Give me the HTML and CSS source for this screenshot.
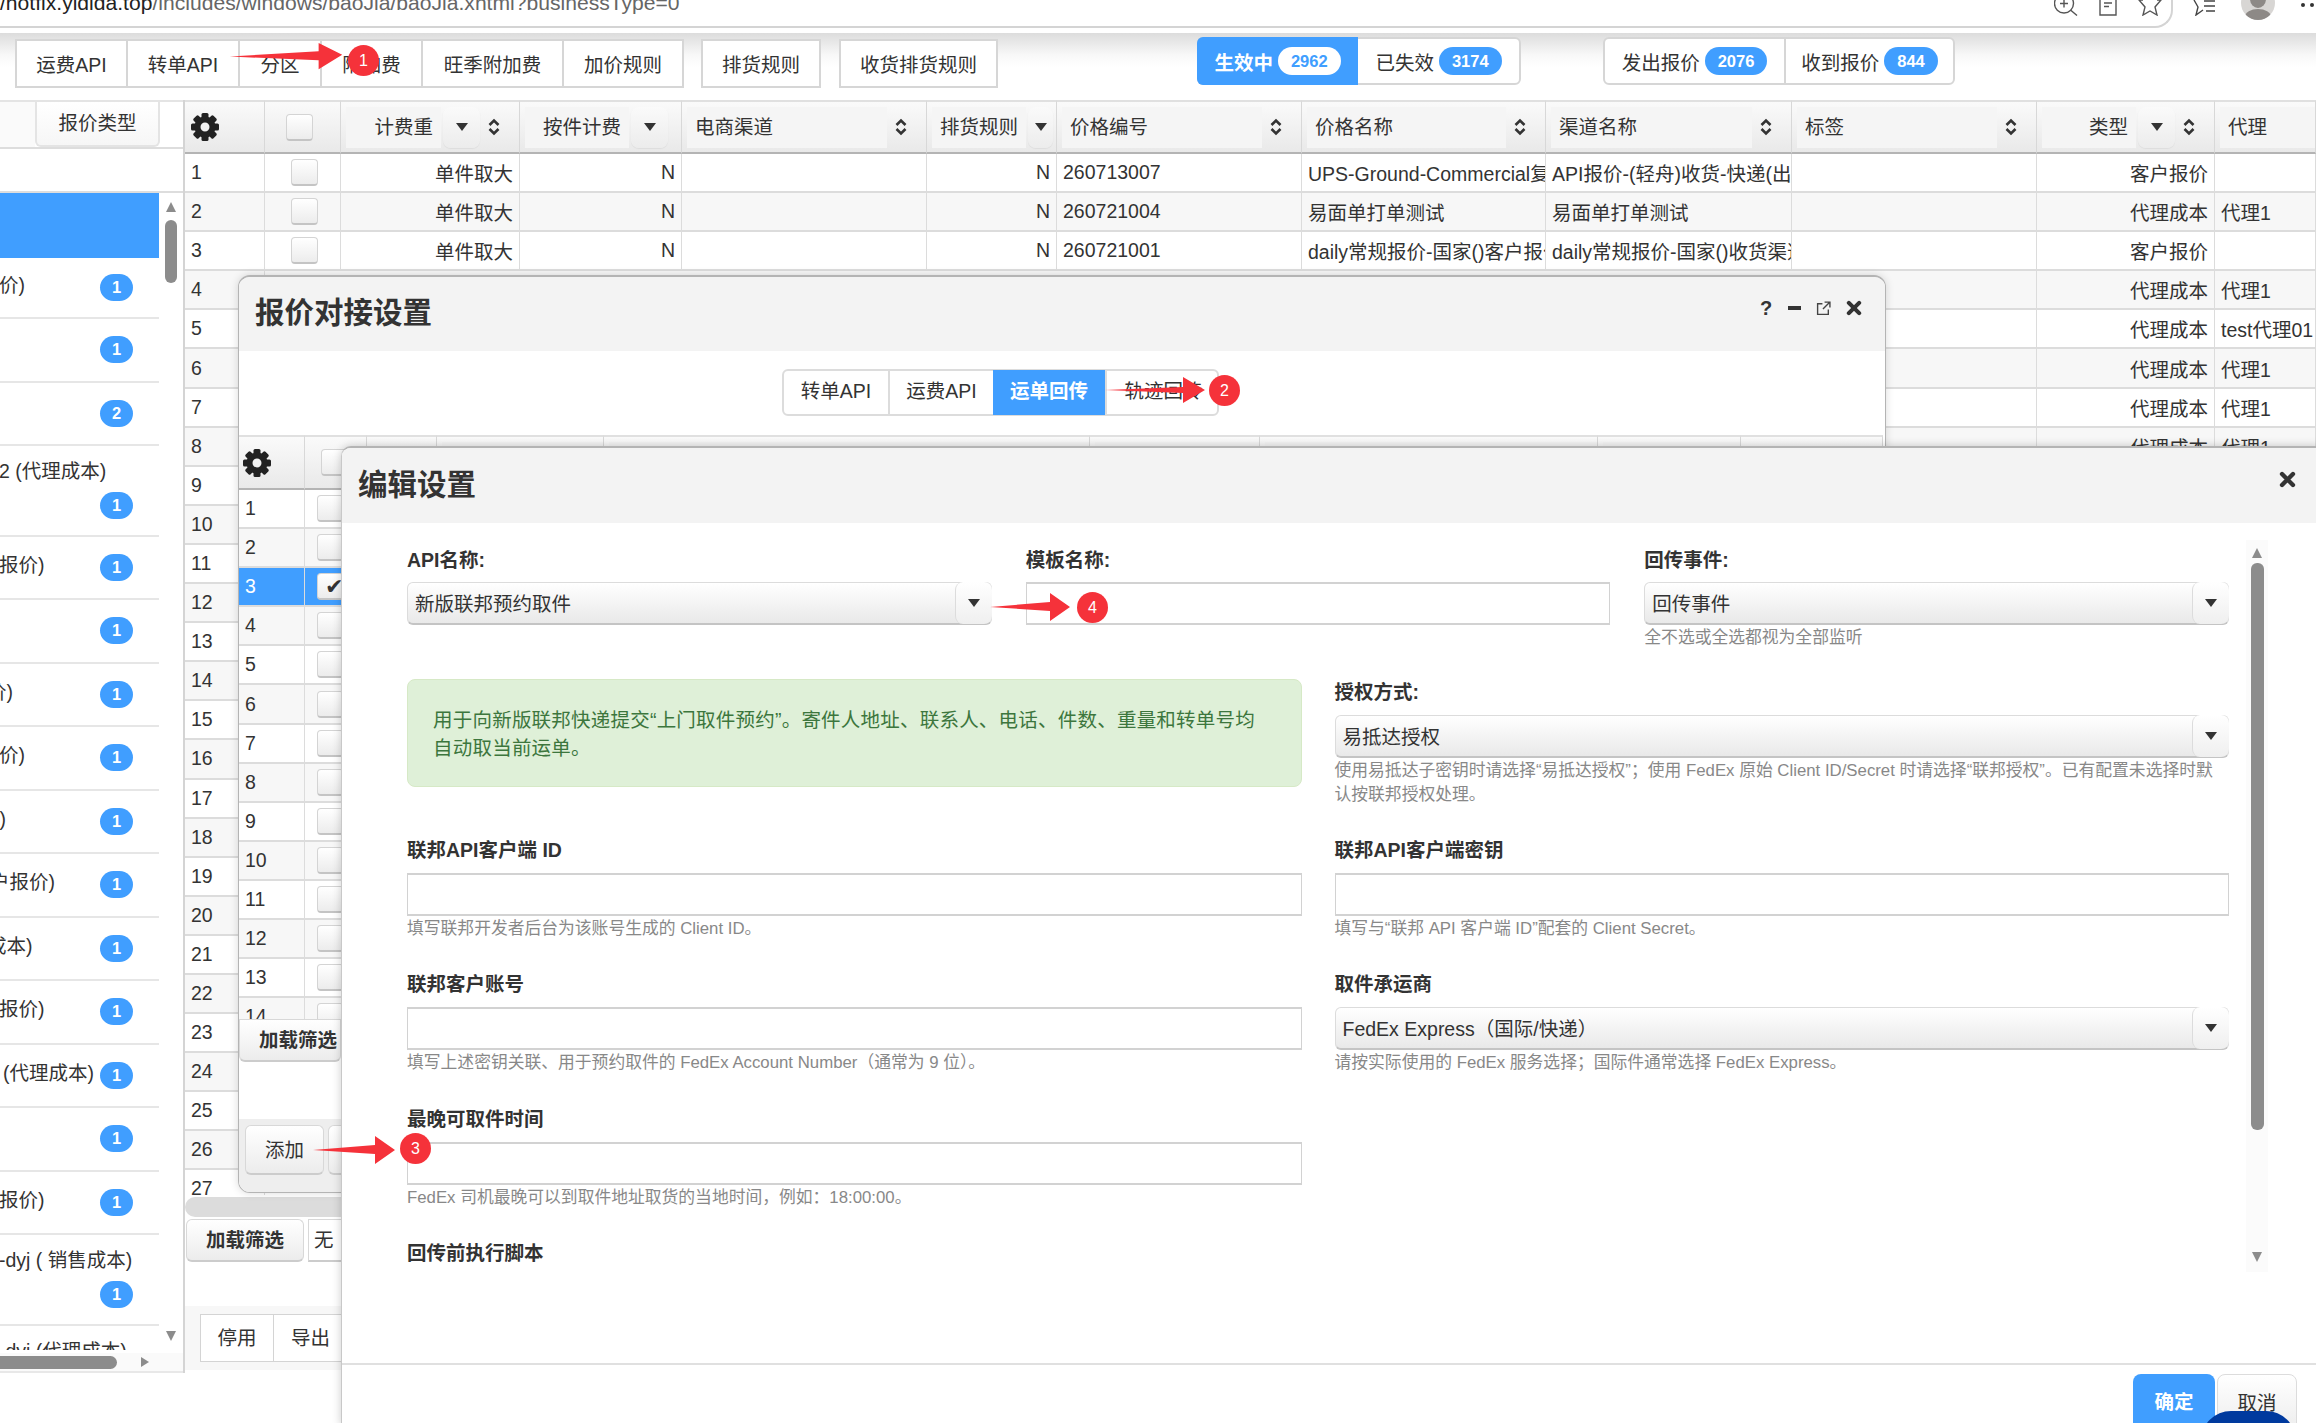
FILE: index.html
```html
<!DOCTYPE html>
<html>
<head>
  <meta charset="utf-8">
  <meta name="viewport" content="width=device-width, initial-scale=1">
  <link rel="stylesheet" href="styles.css">
</head>
<body>

  <!-- Shared icons -->
  <svg class="defs" width="0" height="0">
    <symbol id="gear" viewBox="0 0 28 28">
      <g fill="#222">
        <rect x="10.5" y="0" width="7" height="7" rx="1.5"/>
        <rect x="10.5" y="0" width="7" height="7" rx="1.5" transform="rotate(45 14 14)"/>
        <rect x="10.5" y="0" width="7" height="7" rx="1.5" transform="rotate(90 14 14)"/>
        <rect x="10.5" y="0" width="7" height="7" rx="1.5" transform="rotate(135 14 14)"/>
        <rect x="10.5" y="0" width="7" height="7" rx="1.5" transform="rotate(180 14 14)"/>
        <rect x="10.5" y="0" width="7" height="7" rx="1.5" transform="rotate(225 14 14)"/>
        <rect x="10.5" y="0" width="7" height="7" rx="1.5" transform="rotate(270 14 14)"/>
        <rect x="10.5" y="0" width="7" height="7" rx="1.5" transform="rotate(315 14 14)"/>
      </g>
      <circle cx="14" cy="14" r="7.5" fill="none" stroke="#222" stroke-width="6"/>
    </symbol>
    <symbol id="sort" viewBox="0 0 12 18">
      <path d="M1.5 7 L6 2.5 L10.5 7 M1.5 11 L6 15.5 L10.5 11" fill="none" stroke="#333" stroke-width="2.6"/>
    </symbol>
    <symbol id="down" viewBox="0 0 12 8">
      <path d="M0 0 H12 L6 8 Z" fill="#333"/>
    </symbol>
    <symbol id="close" viewBox="0 0 14 14">
      <path d="M2.5 2.5 L11.5 11.5 M11.5 2.5 L2.5 11.5" fill="none" stroke="#333" stroke-width="3.6" stroke-linecap="round"/>
    </symbol>
  </svg>

  <!-- Browser address bar, cut off by the top of the capture -->
  <div class="address">
    <div class="address-field">
      <div class="url"><b>/hotfix.yidida.top</b>/includes/windows/baoJia/baoJia.xhtml?businessType=0</div>
      <svg class="chrome-icon zoom-icon" viewBox="0 0 24 15"><circle cx="10" cy="3" r="9.5" fill="none" stroke="#555" stroke-width="1.4"/><path d="M16.5 9.5 L23 15 M10 -1 V7 M6 3 H14" fill="none" stroke="#555" stroke-width="1.4"/></svg>
      <svg class="chrome-icon doc-icon" viewBox="0 0 18 16"><path d="M1 0 V15 H17 V0 M5 3 H13 M5 6.5 H10" fill="none" stroke="#555" stroke-width="1.4"/></svg>
      <svg class="chrome-icon star-icon" viewBox="0 0 24 16"><path d="M5 0 L1 0 L7 7 L5 15 L12 11 L19 15 L17 7 L23 0 L19 0" fill="none" stroke="#555" stroke-width="1.4"/></svg>
    </div>
    <svg class="chrome-icon fav-icon" viewBox="0 0 24 16"><path d="M2 0 L6 7 L4 15 L11 10 M12 1 H23 M12 6 H23 M14 11 H23" fill="none" stroke="#444" stroke-width="1.4"/></svg>
    <div class="avatar"><span class="avatar-head"></span><span class="avatar-body"></span></div>
    <div class="dots"><span></span><span></span></div>
  </div>

  <!-- Top toolbar -->
  <div class="toolbar">
    <div class="btn-group">
      <a class="tbtn w113">运费API</a><a class="tbtn w112">转单API</a><a class="tbtn w82">分区</a><a class="tbtn w101">附加费</a><a class="tbtn w141">旺季附加费</a><a class="tbtn w120">加价规则</a>
    </div>
    <a class="tbtn single w120">排货规则</a>
    <a class="tbtn single w159">收货排货规则</a>
    <div class="status-group first">
      <a class="status active w161">生效中<span class="pill">2962</span></a><a class="status w161">已失效<span class="pill">3174</span></a>
    </div>
    <div class="status-group second">
      <a class="status w179">发出报价<span class="pill">2076</span></a><a class="status w169">收到报价<span class="pill">844</span></a>
    </div>
  </div>

  <div class="content">

    <!-- Left list of quote types -->
    <div class="left">
      <div class="left-head">
        <div class="left-head-stub"></div>
        <div class="left-head-btn">报价类型</div>
      </div>
      <div class="left-filter"></div>
      <div class="left-body">
        <ul class="type-list">
          <li class="selected"></li>
          <li><span class="cut">价)</span><i class="count">1</i></li>
          <li class="tall"><i class="count">1</i></li>
          <li class="tall"><i class="count">2</i></li>
          <li class="double"><span class="cut">2 (代理成本)</span><i class="count">1</i></li>
          <li class="tall"><span class="cut">报价)</span><i class="count">1</i></li>
          <li class="tall"><i class="count">1</i></li>
          <li class="tall"><span class="cut cut-more">价)</span><i class="count">1</i></li>
          <li class="tall"><span class="cut">价)</span><i class="count">1</i></li>
          <li class="tall"><span class="cut cut-most">价)</span><i class="count">1</i></li>
          <li class="tall"><span class="cut cut-some">户报价)</span><i class="count">1</i></li>
          <li class="tall"><span class="cut cut-more">成本)</span><i class="count">1</i></li>
          <li class="tall"><span class="cut">报价)</span><i class="count">1</i></li>
          <li class="tall"><span class="cut cut-none">(代理成本)</span><i class="count">1</i></li>
          <li class="tall"><i class="count">1</i></li>
          <li class="tall"><span class="cut">报价)</span><i class="count">1</i></li>
          <li class="double"><span class="cut">-dyj ( 销售成本)</span><i class="count">1</i></li>
          <li class="double"><span class="cut">-dyj (代理成本)</span><i class="count">1</i></li>
        </ul>
        <div class="vscroll">
          <span class="arrow-up"></span>
          <span class="vthumb"></span>
          <span class="arrow-down"></span>
        </div>
      </div>
      <div class="hscroll">
        <span class="hthumb"></span>
        <span class="arrow-right"></span>
      </div>
    </div>

    <!-- Main price table -->
    <div class="main">
      <div class="grid-wrap">
        <table class="grid">
          <colgroup>
            <col class="c80"><col class="c76"><col class="c179"><col class="c162"><col class="c245"><col class="c130"><col class="c245"><col class="c244"><col class="c246"><col class="c245"><col class="c178"><col class="c101">
          </colgroup>
          <thead>
            <tr>
              <th><svg class="gear"><use href="#gear"/></svg></th>
              <th><span class="check head-check"></span></th>
              <th><div class="hd"><span class="hd-label right">计费重</span><span class="hd-drop"><svg><use href="#down"/></svg></span><svg class="sort"><use href="#sort"/></svg></div></th>
              <th><div class="hd"><span class="hd-label right">按件计费</span><span class="hd-drop"><svg><use href="#down"/></svg></span></div></th>
              <th><div class="hd"><span class="hd-label">电商渠道</span><svg class="sort"><use href="#sort"/></svg></div></th>
              <th><div class="hd"><span class="hd-label">排货规则</span><span class="hd-drop narrow"><svg><use href="#down"/></svg></span></div></th>
              <th><div class="hd"><span class="hd-label">价格编号</span><svg class="sort"><use href="#sort"/></svg></div></th>
              <th><div class="hd"><span class="hd-label">价格名称</span><svg class="sort"><use href="#sort"/></svg></div></th>
              <th><div class="hd"><span class="hd-label">渠道名称</span><svg class="sort"><use href="#sort"/></svg></div></th>
              <th><div class="hd"><span class="hd-label">标签</span><svg class="sort"><use href="#sort"/></svg></div></th>
              <th><div class="hd"><span class="hd-label right">类型</span><span class="hd-drop"><svg><use href="#down"/></svg></span><svg class="sort"><use href="#sort"/></svg></div></th>
              <th><div class="hd"><span class="hd-label">代理</span></div></th>
            </tr>
          </thead>
          <tbody>
            <tr><td>1</td><td class="mid"><span class="check"></span></td><td class="right">单件取大</td><td class="right">N</td><td></td><td class="right">N</td><td>260713007</td><td>UPS-Ground-Commercial复制报价</td><td>API报价-(轻舟)收货-快递(出口)</td><td></td><td class="right">客户报价</td><td></td></tr>
            <tr><td>2</td><td class="mid"><span class="check"></span></td><td class="right">单件取大</td><td class="right">N</td><td></td><td class="right">N</td><td>260721004</td><td>易面单打单测试</td><td>易面单打单测试</td><td></td><td class="right">代理成本</td><td>代理1</td></tr>
            <tr><td>3</td><td class="mid"><span class="check"></span></td><td class="right">单件取大</td><td class="right">N</td><td></td><td class="right">N</td><td>260721001</td><td>daily常规报价-国家()客户报价</td><td>daily常规报价-国家()收货渠道</td><td></td><td class="right">客户报价</td><td></td></tr>
            <tr><td>4</td><td colspan="9"></td><td class="right">代理成本</td><td>代理1</td></tr>
            <tr><td>5</td><td colspan="9"></td><td class="right">代理成本</td><td>test代理01</td></tr>
            <tr><td>6</td><td colspan="9"></td><td class="right">代理成本</td><td>代理1</td></tr>
            <tr><td>7</td><td colspan="9"></td><td class="right">代理成本</td><td>代理1</td></tr>
            <tr><td>8</td><td colspan="9"></td><td class="right">代理成本</td><td>代理1</td></tr>
            <tr><td>9</td><td colspan="11"></td></tr>
            <tr><td>10</td><td colspan="11"></td></tr>
            <tr><td>11</td><td colspan="11"></td></tr>
            <tr><td>12</td><td colspan="11"></td></tr>
            <tr><td>13</td><td colspan="11"></td></tr>
            <tr><td>14</td><td colspan="11"></td></tr>
            <tr><td>15</td><td colspan="11"></td></tr>
            <tr><td>16</td><td colspan="11"></td></tr>
            <tr><td>17</td><td colspan="11"></td></tr>
            <tr><td>18</td><td colspan="11"></td></tr>
            <tr><td>19</td><td colspan="11"></td></tr>
            <tr><td>20</td><td colspan="11"></td></tr>
            <tr><td>21</td><td colspan="11"></td></tr>
            <tr><td>22</td><td colspan="11"></td></tr>
            <tr><td>23</td><td colspan="11"></td></tr>
            <tr><td>24</td><td colspan="11"></td></tr>
            <tr><td>25</td><td colspan="11"></td></tr>
            <tr><td>26</td><td colspan="11"></td></tr>
            <tr><td>27</td><td colspan="11"></td></tr>
          </tbody>
        </table>
      </div>
      <div class="grid-scroll"><span></span></div>
      <div class="filter-row">
        <a class="pbtn strong w118">加载筛选</a>
        <a class="pbtn flat">无</a>
      </div>
      <div class="main-foot">
        <a class="fbtn">停用</a><a class="fbtn">导出</a>
      </div>
    </div>
  </div>

  <!-- Quote connection window -->
  <div class="window window-back">
    <div class="window-title">
      <h2>报价对接设置</h2>
      <div class="window-tools">
        <span class="tool-help">?</span>
        <span class="tool-min"></span>
        <svg class="tool-ext" viewBox="0 0 14 14"><path d="M6 2.5 H1.5 V12.5 H11.5 V8 M8 1 H13 V6 M13 1 L6.5 7.5" fill="none" stroke="#444" stroke-width="1.3"/></svg>
        <svg class="tool-close"><use href="#close"/></svg>
      </div>
    </div>
    <div class="tabs">
      <a class="tab w104">转单API</a><a class="tab w105">运费API</a><a class="tab active w112">运单回传</a><a class="tab w115">轨迹回传</a>
    </div>
    <div class="inner-wrap">
      <table class="grid inner">
        <colgroup>
          <col class="c65"><col class="c61"><col class="c69"><col class="c165"><col class="c480"><col class="c167"><col class="c334"><col class="c141"><col class="c140">
        </colgroup>
        <thead>
          <tr>
            <th><svg class="gear"><use href="#gear"/></svg></th>
            <th><span class="check head-check"></span></th>
            <th></th>
            <th><div class="hd"><span class="hd-label"></span></div></th>
            <th><div class="hd"><span class="hd-label"></span></div></th>
            <th><div class="hd"><span class="hd-label"></span></div></th>
            <th><div class="hd"><span class="hd-label"></span></div></th>
            <th><div class="hd"><span class="hd-label"></span></div></th>
            <th></th>
          </tr>
        </thead>
        <tbody>
          <tr><td>1</td><td class="mid"><span class="check"></span></td><td colspan="7"></td></tr>
          <tr><td>2</td><td class="mid"><span class="check"></span></td><td colspan="7"></td></tr>
          <tr class="picked"><td>3</td><td class="mid"><span class="check checked">✔</span></td><td colspan="7"></td></tr>
          <tr><td>4</td><td class="mid"><span class="check"></span></td><td colspan="7"></td></tr>
          <tr><td>5</td><td class="mid"><span class="check"></span></td><td colspan="7"></td></tr>
          <tr><td>6</td><td class="mid"><span class="check"></span></td><td colspan="7"></td></tr>
          <tr><td>7</td><td class="mid"><span class="check"></span></td><td colspan="7"></td></tr>
          <tr><td>8</td><td class="mid"><span class="check"></span></td><td colspan="7"></td></tr>
          <tr><td>9</td><td class="mid"><span class="check"></span></td><td colspan="7"></td></tr>
          <tr><td>10</td><td class="mid"><span class="check"></span></td><td colspan="7"></td></tr>
          <tr><td>11</td><td class="mid"><span class="check"></span></td><td colspan="7"></td></tr>
          <tr><td>12</td><td class="mid"><span class="check"></span></td><td colspan="7"></td></tr>
          <tr><td>13</td><td class="mid"><span class="check"></span></td><td colspan="7"></td></tr>
          <tr><td>14</td><td class="mid"><span class="check"></span></td><td colspan="7"></td></tr>
        </tbody>
      </table>
    </div>
    <a class="pbtn strong inner-filter">加载筛选</a>
    <div class="window-foot">
      <a class="pbtn w79">添加</a><a class="pbtn w79">修改</a>
    </div>
  </div>

  <!-- Edit settings window -->
  <div class="window window-front">
    <div class="window-title front-title">
      <h2>编辑设置</h2>
      <svg class="front-close"><use href="#close"/></svg>
    </div>
    <div class="edit-body">
      <div class="form">
        <div class="row-three">
          <div class="field">
            <label>API名称:</label>
            <div class="select"><span>新版联邦预约取件</span><i><svg><use href="#down"/></svg></i></div>
          </div>
          <div class="field">
            <label>模板名称:</label>
            <div class="input"></div>
          </div>
          <div class="field">
            <label>回传事件:</label>
            <div class="select"><span>回传事件</span><i><svg><use href="#down"/></svg></i></div>
            <p class="hint">全不选或全选都视为全部监听</p>
          </div>
        </div>
        <div class="row-two">
          <div class="alert">用于向新版联邦快递提交“上门取件预约”。寄件人地址、联系人、电话、件数、重量和转单号均自动取当前运单。</div>
          <div class="field">
            <label>授权方式:</label>
            <div class="select"><span>易抵达授权</span><i><svg><use href="#down"/></svg></i></div>
            <p class="hint">使用易抵达子密钥时请选择“易抵达授权”；使用 FedEx 原始 Client ID/Secret 时请选择“联邦授权”。已有配置未选择时默认按联邦授权处理。</p>
          </div>
          <div class="field">
            <label>联邦API客户端 ID</label>
            <div class="input"></div>
            <p class="hint">填写联邦开发者后台为该账号生成的 Client ID。</p>
          </div>
          <div class="field">
            <label>联邦API客户端密钥</label>
            <div class="input"></div>
            <p class="hint">填写与“联邦 API 客户端 ID”配套的 Client Secret。</p>
          </div>
          <div class="field">
            <label>联邦客户账号</label>
            <div class="input"></div>
            <p class="hint">填写上述密钥关联、用于预约取件的 FedEx Account Number（通常为 9 位）。</p>
          </div>
          <div class="field">
            <label>取件承运商</label>
            <div class="select"><span>FedEx Express（国际/快递）</span><i><svg><use href="#down"/></svg></i></div>
            <p class="hint">请按实际使用的 FedEx 服务选择；国际件通常选择 FedEx Express。</p>
          </div>
          <div class="field">
            <label>最晚可取件时间</label>
            <div class="input"></div>
            <p class="hint">FedEx 司机最晚可以到取件地址取货的当地时间，例如：18:00:00。</p>
          </div>
          <div class="field"></div>
          <div class="field">
            <label>回传前执行脚本</label>
          </div>
        </div>
      </div>
      <div class="edit-scroll">
        <span class="arrow-up"></span>
        <span class="edit-thumb"></span>
        <span class="arrow-down"></span>
      </div>
    </div>
    <div class="edit-foot">
      <a class="ok">确定</a><a class="cancel">取消</a>
      <span class="blob"></span>
    </div>
  </div>

  <!-- Red annotation marks drawn on top of the screenshot -->
  <div class="mark mark-1">
    <svg viewBox="0 0 124 32"><path d="M0 15 L98 9 L98 0 L124 13 L98 29 L98 19 Z"/></svg>
    <span>1</span>
  </div>
  <div class="mark mark-2">
    <svg viewBox="0 0 100 30"><path d="M0 15 L78 12 L78 2 L100 15 L78 28 L78 18 Z"/></svg>
    <span>2</span>
  </div>
  <div class="mark mark-3">
    <svg viewBox="0 0 82 30"><path d="M0 15 L62 10 L62 1 L82 15 L62 29 L62 19 Z"/></svg>
    <span>3</span>
  </div>
  <div class="mark mark-4">
    <svg viewBox="0 0 80 30"><path d="M0 15 L60 10 L60 1 L80 15 L60 29 L60 19 Z"/></svg>
    <span>4</span>
  </div>

</body>
</html>
```

FILE: styles.css
```css
/* Base styling */
* {
  box-sizing: border-box;
}
html, body {
  margin: 0;
  padding: 0;
}
body {
  width: 2316px;
  height: 1423px;
  position: relative;
  overflow: hidden;
  background: #fff;
  color: #333;
  font-family: "Liberation Sans", "Noto Sans CJK SC", sans-serif;
  font-size: 19.5px;
}
.defs {
  position: absolute;
}
ul, p, h2 {
  margin: 0;
  padding: 0;
}

/* Browser bar */
.address {
  height: 33px;
  display: flex;
  overflow: hidden;
  background: #fff;
}
.address-field {
  width: 2173px;
  height: 28px;
  flex: none;
  position: relative;
  border-bottom: 2px solid #d4d4d4;
  border-right: 2px solid #d4d4d4;
  border-bottom-right-radius: 18px;
}
.url {
  margin-top: -12px;
  font-size: 21.1px;
  line-height: 30px;
  color: #666;
  white-space: nowrap;
}
.url b {
  font-weight: normal;
  color: #222;
}
.chrome-icon {
  position: absolute;
  top: 0;
  height: 16px;
}
.zoom-icon { left: 2054px; width: 24px; }
.doc-icon { left: 2099px; width: 18px; }
.star-icon { left: 2138px; width: 24px; }
.fav-icon { left: 2192px; width: 24px; }
.avatar {
  position: absolute;
  left: 2241px;
  top: -14px;
  width: 34px;
  height: 34px;
  border-radius: 50%;
  background: #d8d6d4;
  overflow: hidden;
}
.avatar-head {
  position: absolute;
  left: 9px;
  top: 4px;
  width: 16px;
  height: 18px;
  border-radius: 50%;
  background: #8d8986;
}
.avatar-body {
  position: absolute;
  left: 4px;
  top: 23px;
  width: 26px;
  height: 16px;
  border-radius: 50%;
  background: #8d8986;
}
.dots {
  position: absolute;
  left: 2301px;
  top: 3px;
  display: flex;
  gap: 5px;
}
.dots span {
  width: 4px;
  height: 4px;
  border-radius: 50%;
  background: #333;
}

/* Toolbar */
.toolbar {
  height: 67px;
  padding: 6px 0 0 15px;
  display: flex;
  align-items: flex-start;
  background: linear-gradient(#dcdcdc, #f8f8f8 22px, #fff 34px);
}
.btn-group {
  display: flex;
}
.tbtn {
  height: 49px;
  line-height: 48px;
  text-align: center;
  flex: none;
  border: 2px solid #d6d6d6;
  border-left-width: 0;
  background: #fff;
}
.btn-group .tbtn:first-child {
  border-left-width: 2px;
}
.tbtn.single {
  border-left-width: 2px;
  margin-left: 17px;
}
.tbtn.single + .tbtn.single {
  margin-left: 18px;
}
.w82 { width: 82px; }
.w101 { width: 101px; }
.w104 { width: 104px; }
.w105 { width: 105px; }
.w112 { width: 112px; }
.w113 { width: 113px; }
.w115 { width: 115px; }
.w118 { width: 118px; }
.w120 { width: 120px; }
.w141 { width: 141px; }
.w159 { width: 159px; }
.w161 { width: 161px; }
.w169 { width: 169px; }
.w179 { width: 179px; }
.w79 { width: 79px; }

.status-group {
  height: 48px;
  margin-top: -2px;
  display: flex;
  border: 2px solid #d6d6d6;
  border-radius: 6px;
  background: #fff;
}
.status-group.first {
  margin-left: 199px;
  border-color: #d6d6d6;
}
.status-group.second {
  margin-left: 82px;
}
.status {
  display: flex;
  align-items: center;
  justify-content: center;
  gap: 5px;
  flex: none;
}
.status + .status {
  border-left: 2px solid #d6d6d6;
}
.status.active {
  background: #409eff;
  color: #fff;
  font-weight: bold;
  margin: -2px 0 -2px -2px;
  border-radius: 6px 0 0 6px;
}
.status.active + .status {
  border-left: 0;
}
.pill {
  height: 28px;
  padding: 0 13px;
  line-height: 28px;
  border-radius: 14px;
  background: #409eff;
  color: #fff;
  font-size: 16.5px;
  font-weight: bold;
  text-align: center;
}
.active .pill {
  background: #fff;
  color: #409eff;
}

/* Page body */
.content {
  display: flex;
  height: 1273px;
}

/* Left panel */
.left {
  width: 183px;
  flex: none;
  height: 1273px;
  display: flex;
  flex-direction: column;
  overflow: hidden;
  border-bottom: 2px solid #e8e8e8;
}
.left-head {
  height: 47px;
  flex: none;
  display: flex;
  border-top: 2px solid #e4e4e4;
}
.left-head-stub {
  width: 35px;
  background: #fafafa;
}
.left-head-btn {
  width: 125px;
  height: 45px;
  line-height: 42px;
  text-align: center;
  border: 2px solid #e4e4e4;
  border-top: 0;
  border-radius: 0 0 6px 6px;
  background: linear-gradient(#fff, #f6f6f6);
}
.left-filter {
  height: 46px;
  flex: none;
  border-top: 2px solid #ddd;
  border-bottom: 2px solid #ddd;
}
.left-body {
  flex: 1;
  min-height: 0;
  display: flex;
}
.type-list {
  width: 159px;
  flex: none;
  list-style: none;
  overflow: hidden;
  height: 1157px;
}
.type-list li {
  height: 63.5px;
  display: flex;
  align-items: center;
  justify-content: flex-end;
  padding-right: 26px;
  border-bottom: 2px solid #e6e6e6;
  white-space: nowrap;
}
.type-list li.selected {
  height: 65px;
  background: #409eff;
  border-bottom: 0;
}
.type-list li:nth-child(2) {
  height: 61px;
}
.type-list li.double {
  height: 90.5px;
  display: block;
  padding-top: 19px;
  line-height: 28px;
}
.cut {
  flex: 1;
  display: block;
  overflow: hidden;
  margin-left: -1px;
  margin-top: -8px;
}
.cut-more {
  margin-left: -13px;
}
.cut-some {
  margin-left: -10px;
}
.cut-most {
  margin-left: -20px;
}
.cut-none {
  margin-left: 3px;
}
.count {
  flex: none;
  display: block;
  width: 33px;
  height: 27px;
  border-radius: 14px;
  background: #409eff;
  color: #fff;
  font-style: normal;
  font-weight: bold;
  font-size: 16.5px;
  line-height: 27px;
  text-align: center;
}
.double .count {
  margin: 7px 0 0 auto;
}
.vscroll {
  width: 24px;
  flex: none;
  display: flex;
  flex-direction: column;
  align-items: center;
  padding: 9px 0 12px;
}
.arrow-up {
  width: 0;
  height: 0;
  border-left: 5px solid transparent;
  border-right: 5px solid transparent;
  border-bottom: 10px solid #8c8c8c;
}
.arrow-down {
  margin-top: auto;
  width: 0;
  height: 0;
  border-left: 5px solid transparent;
  border-right: 5px solid transparent;
  border-top: 10px solid #8c8c8c;
}
.vthumb {
  margin-top: 8px;
  width: 12px;
  height: 63px;
  border-radius: 6px;
  background: #8c8c8c;
}
.hscroll {
  height: 18px;
  flex: none;
  display: flex;
  align-items: center;
  background: #fafafa;
}
.hthumb {
  width: 117px;
  height: 13px;
  border-radius: 0 7px 7px 0;
  background: #8c8c8c;
}
.arrow-right {
  margin-left: 24px;
  width: 0;
  height: 0;
  border-top: 5px solid transparent;
  border-bottom: 5px solid transparent;
  border-left: 8px solid #8c8c8c;
}

/* Main table */
.main {
  flex: 1;
  min-width: 0;
  border-left: 2px solid #d4d4d4;
  display: flex;
  flex-direction: column;
}
.grid-wrap {
  height: 1095px;
  flex: none;
  overflow: hidden;
}
.grid {
  table-layout: fixed;
  width: 2131px;
  border-collapse: separate;
  border-spacing: 0;
}
.c61 { width: 61px; }
.c65 { width: 65px; }
.c69 { width: 69px; }
.c76 { width: 76px; }
.c80 { width: 80px; }
.c101 { width: 101px; }
.c130 { width: 130px; }
.c140 { width: 140px; }
.c141 { width: 141px; }
.c162 { width: 162px; }
.c165 { width: 165px; }
.c167 { width: 167px; }
.c178 { width: 178px; }
.c179 { width: 179px; }
.c244 { width: 244px; }
.c245 { width: 245px; }
.c246 { width: 246px; }
.c334 { width: 334px; }
.c480 { width: 480px; }
.grid th {
  height: 54px;
  padding: 0;
  font-weight: normal;
  background: linear-gradient(#fafafa, #e9e9e9);
  border-top: 2px solid #e0e0e0;
  border-right: 1px solid #d8d8d8;
  border-bottom: 2px solid #b4b4b4;
  text-align: left;
  overflow: hidden;
}
.grid td {
  height: 39.1px;
  padding: 0 6px;
  border-right: 1px solid #dcdcdc;
  border-bottom: 2px solid #dcdcdc;
  white-space: nowrap;
  overflow: hidden;
}
.grid td.right {
  text-align: right;
}
.grid td.mid {
  padding: 0 0 0 3px;
  text-align: center;
}
.grid tbody tr:nth-child(even) td {
  background: #f7f7f7;
}
.grid tbody tr:nth-child(odd) td {
  background: #fff;
}
.gear {
  display: block;
  width: 28px;
  height: 28px;
  margin-left: 6px;
}
.check {
  display: inline-block;
  width: 27px;
  height: 27px;
  vertical-align: middle;
  border: 1px solid #d4d4d4;
  border-bottom: 2px solid #c4c4c4;
  border-radius: 4px;
  background: linear-gradient(#fff, #ececec);
}
.head-check {
  display: block;
  margin-left: 21px;
}
.hd {
  height: 41px;
  display: flex;
  align-items: center;
  padding: 0 0 0 5px;
}
.hd-label {
  flex: 1;
  height: 41px;
  line-height: 41px;
  padding: 0 8px;
  background: #f5f5f5;
  white-space: nowrap;
}
.hd-label.right {
  text-align: right;
}
.hd-drop {
  width: 37px;
  height: 41px;
  margin-left: 2px;
  flex: none;
  display: flex;
  align-items: center;
  justify-content: center;
  border-radius: 8px;
  background: linear-gradient(#fafafa, #ececec);
  box-shadow: 0 1px 1px #ddd;
}
.hd-drop svg {
  width: 12px;
  height: 8px;
}
.hd-drop:last-child {
  margin-right: 13px;
}
.hd-drop.narrow:last-child {
  margin-right: 4px;
  width: 25px;
}
.sort {
  width: 12px;
  height: 18px;
  flex: none;
  margin: 0 19px 0 8px;
}
.grid-scroll {
  height: 22px;
  flex: none;
  padding: 2px 0;
}
.grid-scroll span {
  display: block;
  width: 700px;
  height: 20px;
  border-radius: 10px;
  background: #dcdcdc;
}
.filter-row {
  height: 89px;
  flex: none;
  padding-top: 2px;
  display: flex;
  align-items: flex-start;
  gap: 4px;
  padding-left: 1px;
}
.pbtn {
  height: 43px;
  line-height: 41px;
  text-align: center;
  flex: none;
  border: 1px solid #d8d8d8;
  border-bottom: 2px solid #ccc;
  border-radius: 6px;
  background: linear-gradient(#fff, #ececec);
}
.pbtn.strong {
  font-weight: bold;
}
.pbtn.flat {
  width: 80px;
  text-align: left;
  padding-left: 5px;
  background: #fff;
  border-radius: 0;
}
.main-foot {
  height: 64px;
  flex: none;
  padding: 8px 0 0 15px;
  display: flex;
  align-items: flex-start;
  background: #f7f7f7;
}
.fbtn {
  width: 74px;
  height: 48px;
  line-height: 46px;
  text-align: center;
  border: 1px solid #d4d4d4;
  background: #fff;
}
.fbtn + .fbtn {
  border-left: 0;
}

/* Floating windows */
.window {
  position: absolute;
  background: #fff;
  overflow: hidden;
}
.window-back {
  left: 238px;
  top: 275px;
  width: 1648px;
  height: 918px;
  border: 2px solid #b4b4b4;
  border-width: 2px 1px 1px 1px;
  border-radius: 12px;
  box-shadow: 0 0 8px rgba(0,0,0,0.15);
}
.window-title {
  height: 74px;
  padding: 0 0 8px 16px;
  display: flex;
  align-items: center;
  background: #f3f3f3;
}
.window-title h2 {
  font-size: 29.5px;
  font-weight: bold;
  color: #333;
}
.window-tools {
  margin-left: auto;
  margin-right: 23px;
  display: flex;
  align-items: center;
  gap: 15px;
  margin-top: -4px;
}
.tool-help {
  width: 14px;
  text-align: center;
  font-weight: bold;
  font-size: 20px;
}
.tool-min {
  width: 13px;
  height: 4px;
  background: #333;
}
.tool-ext {
  width: 15px;
  height: 15px;
}
.tool-close {
  width: 16px;
  height: 16px;
}
.tabs {
  margin: 18px 0 19px 543px;
  height: 47px;
  display: flex;
  width: 437px;
  border: 2px solid #dcdcdc;
  border-radius: 6px;
}
.tab {
  line-height: 42px;
  text-align: center;
  flex: none;
  margin: -1px 0;
}
.tab + .tab {
  border-left: 2px solid #dcdcdc;
}
.tab.active {
  background: #409eff;
  color: #fff;
  font-weight: bold;
  border-left: 0;
}
.inner-wrap {
  height: 584px;
  overflow: hidden;
}
.grid.inner {
  width: 1644px;
}
.grid.inner th {
  height: 55px;
}
.grid.inner .gear {
  margin-left: 4px;
}
.grid.inner .head-check {
  margin-left: 16px;
}
.grid.inner .mid {
  text-align: left;
  padding-left: 12px;
}
.grid.inner .picked td {
  background: #409eff;
  color: #fff;
}
.checked {
  color: #333;
  font-size: 22px;
  line-height: 26px;
  text-align: right;
}
.inner-filter {
  display: block;
  width: 102px;
  border-radius: 0 0 6px 6px;
  text-align: left;
  padding-left: 19px;
}
.window-foot {
  margin-top: 57px;
  height: 74px;
  padding: 6px;
  display: flex;
  align-items: flex-start;
  gap: 4px;
  background: #eee;
}
.window-foot .pbtn {
  height: 50px;
  line-height: 48px;
}
.window-front {
  left: 341px;
  top: 446px;
  width: 1980px;
  height: 980px;
  border-top: 2px solid #b4b4b4;
  border-left: 1px solid #c8c8c8;
  border-radius: 10px 0 0 0;
  box-shadow: 0 0 10px rgba(0,0,0,0.2);
}
.front-title {
  height: 75px;
}
.front-close {
  position: absolute;
  left: 1937px;
  top: 23px;
  width: 17px;
  height: 17px;
}

/* Edit form */
.edit-body {
  height: 842px;
  display: flex;
  padding: 22px 0 0 65px;
  border-bottom: 2px solid #e0e0e0;
}
.form {
  width: 1822px;
  flex: none;
}
.row-three {
  display: grid;
  grid-template-columns: repeat(3, 1fr);
  column-gap: 34px;
  height: 132px;
}
.row-two {
  display: grid;
  grid-template-columns: repeat(2, 1fr);
  column-gap: 33px;
  row-gap: 28.2px;
}
.field label {
  display: block;
  height: 30px;
  line-height: 30px;
  font-weight: bold;
  margin-bottom: 7px;
}
.row-two .field label {
  margin-bottom: 8px;
}
.select {
  height: 43px;
  display: flex;
  align-items: center;
  border: 1px solid #dcdcdc;
  border-bottom: 2px solid #c4c4c4;
  border-radius: 6px;
  background: linear-gradient(#fff, #e9e9e9);
  padding-left: 7px;
}
.select span {
  flex: 1;
  padding-bottom: 2px;
}
.select i {
  width: 37px;
  height: 42px;
  margin-right: -1px;
  display: flex;
  align-items: center;
  justify-content: center;
  border-left: 1px solid #dcdcdc;
  border-radius: 8px;
  background: linear-gradient(#fff, #efefef);
}
.select svg {
  width: 12px;
  height: 8px;
}
.input {
  height: 43px;
  border: 2px solid #d2d2d2;
  border-width: 2px 1.5px;
  background: #fff;
}
.hint {
  font-size: 16.8px;
  line-height: 24px;
  color: #888;
  padding-top: 1px;
}
.alert {
  height: 108px;
  margin-top: 2px;
  padding: 26px 34px 0 25px;
  border: 1px solid #d6e9c6;
  border-radius: 8px;
  background: #dff0d8;
  color: #3c763d;
  line-height: 28px;
  letter-spacing: 0.22px;
}
.edit-scroll {
  width: 22px;
  height: 732px;
  margin: -5px 0 0 17px;
  flex: none;
  display: flex;
  flex-direction: column;
  align-items: center;
  padding: 8px 0 10px;
  background: #fbfbfb;
}
.edit-thumb {
  margin-top: 5px;
  width: 13px;
  height: 567px;
  border-radius: 6px;
  background: #8c8c8c;
}

/* Edit footer */
.edit-foot {
  position: relative;
  padding: 9px 0 0 1791px;
  display: flex;
  gap: 2px;
}
.ok, .cancel {
  height: 60px;
  padding-top: 10px;
  line-height: 36px;
  text-align: center;
  flex: none;
  border-radius: 8px;
}
.ok {
  width: 82px;
  background: #409eff;
  color: #fff;
  font-weight: bold;
}
.cancel {
  width: 80px;
  border: 1px solid #dcdcdc;
  background: linear-gradient(#fff, #ececec);
}
.blob {
  position: absolute;
  left: 1859px;
  top: 46px;
  width: 95px;
  height: 40px;
  border-radius: 30px 30px 0 0;
  background: #003a9e;
}

/* Red annotation marks */
.mark {
  position: absolute;
  height: 32px;
}
.mark svg {
  position: absolute;
  left: 0;
  top: 0;
  height: 100%;
  fill: #f5323a;
}
.mark span {
  position: absolute;
  width: 31px;
  height: 31px;
  border-radius: 50%;
  background: #f5323a;
  color: #fff;
  font-size: 16px;
  line-height: 31px;
  text-align: center;
}
.mark-1 { left: 224px; top: 43px; height: 29px; }
.mark-1 svg { width: 124px; }
.mark-1 span { left: 124px; top: 2px; }
.mark-2 { left: 1105px; top: 375px; height: 30px; }
.mark-2 svg { width: 100px; }
.mark-2 span { left: 104px; top: 0; }
.mark-3 { left: 313px; top: 1135px; height: 30px; }
.mark-3 svg { width: 82px; }
.mark-3 span { left: 87px; top: -2px; }
.mark-4 { left: 990px; top: 592px; height: 30px; }
.mark-4 svg { width: 80px; }
.mark-4 span { left: 87px; top: 0; }
```
